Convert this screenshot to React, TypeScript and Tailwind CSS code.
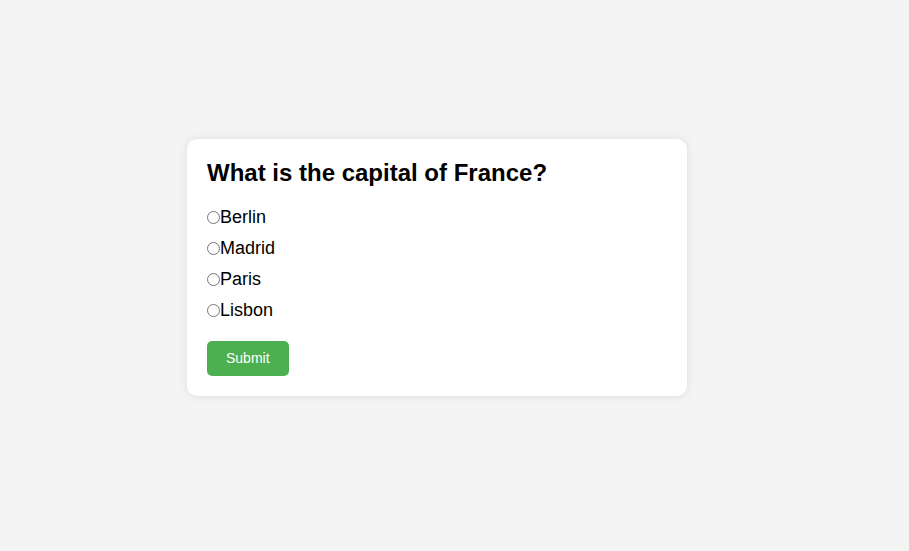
import { useState } from 'react';

const OPTIONS = ['Berlin', 'Madrid', 'Paris', 'Lisbon'];

export default function App() {
  const [answer, setAnswer] = useState('');

  return (
    <div className="min-h-screen bg-[#f4f4f4] pt-[139px] pl-[187px] font-['Liberation_Sans',Arial,sans-serif]">
      <div className="w-[500px] bg-white rounded-[10px] p-5 shadow-[0_0_10px_rgba(0,0,0,0.1)]">
        <h2 className="text-[24px] font-bold leading-[28px] mb-5 text-black">What is the capital of France?</h2>
        <div className="flex flex-col gap-[11px]">
          {OPTIONS.map(o => (
            <label key={o} className="flex items-center text-[18px] leading-[20px] text-black">
              <input
                type="radio"
                name="q"
                value={o}
                checked={answer === o}
                onChange={() => setAnswer(o)}
                className="m-0 w-[13px] h-[13px]"
              />
              {o}
            </label>
          ))}
        </div>
        <button className="mt-[21px] bg-[#4caf50] text-white text-[14px] leading-[15px] px-[19px] py-[10px] rounded-[5px]">
          Submit
        </button>
      </div>
    </div>
  );
}
